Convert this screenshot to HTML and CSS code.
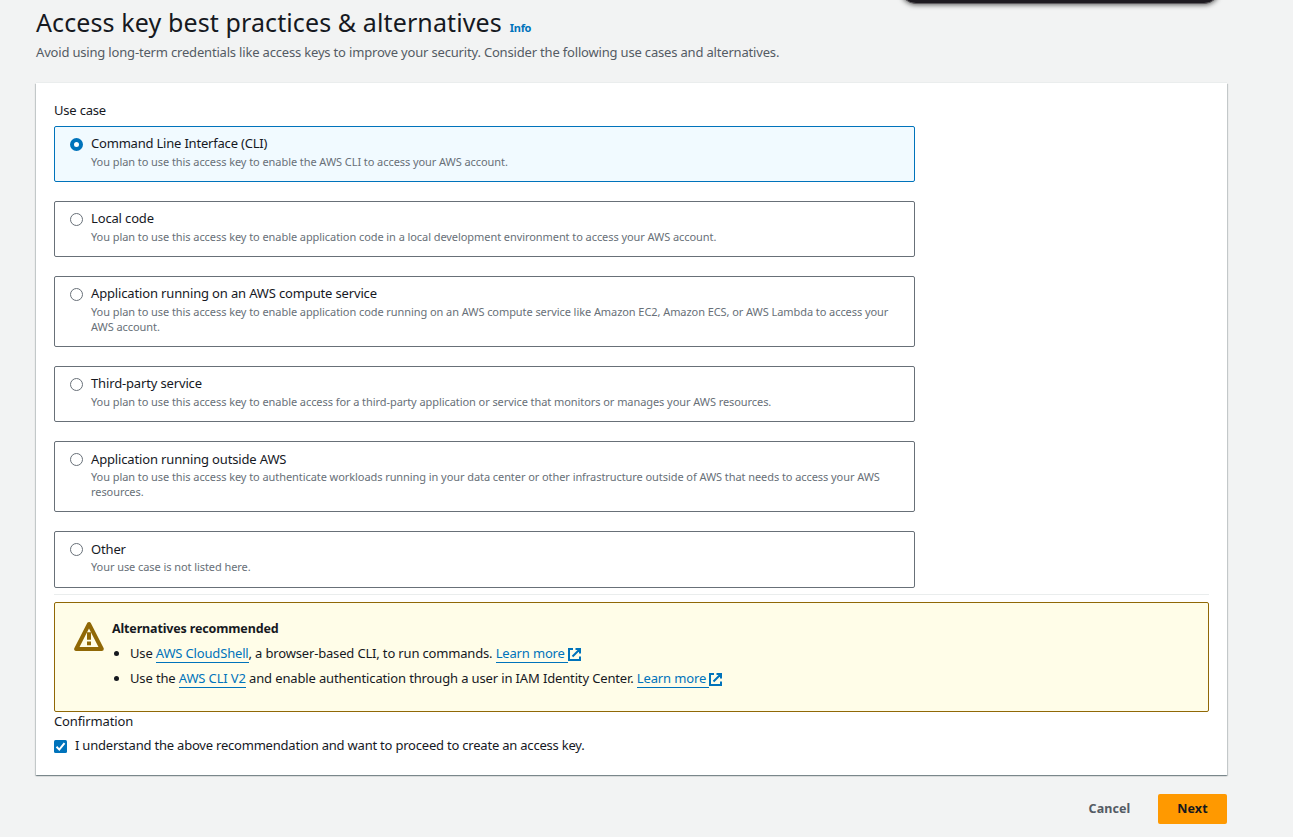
FILE: index.html
```html
<!DOCTYPE html>
<html lang="en">
<head>
<meta charset="utf-8">
<title>Access key best practices &amp; alternatives</title>
<link rel="stylesheet" href="styles.css">
</head>
<body>
<div class="floating-bar"></div>
<main class="page">
  <header class="header">
    <h1 class="title"><span>Access key best practices &amp; alternatives</span><a class="info">Info</a></h1>
    <p class="subtitle">Avoid using long-term credentials like access keys to improve your security. Consider the following use cases and alternatives.</p>
  </header>
  <section class="panel">
    <div class="field-label">Use case</div>
    <div class="tiles">
      <label class="tile selected"><i class="radio"></i><div><div class="name">Command Line Interface (CLI)</div><div class="desc">You plan to use this access key to enable the AWS CLI to access your AWS account.</div></div></label>
      <label class="tile"><i class="radio"></i><div><div class="name">Local code</div><div class="desc">You plan to use this access key to enable application code in a local development environment to access your AWS account.</div></div></label>
      <label class="tile tall"><i class="radio"></i><div><div class="name">Application running on an AWS compute service</div><div class="desc">You plan to use this access key to enable application code running on an AWS compute service like Amazon EC2, Amazon ECS, or AWS Lambda to access your<br>AWS account.</div></div></label>
      <label class="tile"><i class="radio"></i><div><div class="name">Third-party service</div><div class="desc">You plan to use this access key to enable access for a third-party application or service that monitors or manages your AWS resources.</div></div></label>
      <label class="tile tall low"><i class="radio"></i><div><div class="name">Application running outside AWS</div><div class="desc">You plan to use this access key to authenticate workloads running in your data center or other infrastructure outside of AWS that needs to access your AWS<br>resources.</div></div></label>
      <label class="tile last low"><i class="radio"></i><div><div class="name">Other</div><div class="desc">Your use case is not listed here.</div></div></label>
    </div>
    <hr class="rule">
    <div class="alert">
      <svg class="warn" viewBox="0 0 30 30"><path d="M15 3 2.2 28h25.6Z" fill="none" stroke="#906806" stroke-width="4" stroke-linejoin="round"/><path d="M15 11.3v7.4M15 20.5v3.8" fill="none" stroke="#906806" stroke-width="4"/></svg>
      <div>
        <div class="alert-title">Alternatives recommended</div>
        <ul class="alert-list">
          <li class="cloudshell">Use <a class="link">AWS CloudShell</a>, a browser-based CLI, to run commands. <a class="link">Learn more&nbsp;</a><svg class="ext" viewBox="0 0 13 13"><path d="M5 1H1v11h11V8.5M7.5 1H12v4.5M12 1 4.5 8.5" fill="none" stroke="#0073bb" stroke-width="2"/></svg></li>
          <li>Use the <a class="link">AWS CLI V2</a> and enable authentication through a user in IAM Identity Center. <a class="link">Learn more&nbsp;</a><svg class="ext" viewBox="0 0 13 13"><path d="M5 1H1v11h11V8.5M7.5 1H12v4.5M12 1 4.5 8.5" fill="none" stroke="#0073bb" stroke-width="2"/></svg></li>
        </ul>
      </div>
    </div>
    <div class="field-label confirm-label">Confirmation</div>
    <label class="confirm"><svg class="check" viewBox="0 0 13 13"><rect width="13" height="13" rx="1.5" fill="#0073bb"/><path d="m2.5 6.8 2.8 2.8 5.2-6.4" fill="none" stroke="#fff" stroke-width="2"/></svg><span>I understand the above recommendation and want to proceed to create an access key.</span></label>
  </section>
  <footer class="actions"><button class="btn">Cancel</button><button class="btn primary">Next</button></footer>
</main>
</body>
</html>
```
FILE: styles.css
```css
* { box-sizing: border-box; }
body { margin: 0; height: 837px; overflow: hidden; background: #f2f3f3; color: #16191f; font: 13px/20px "Noto Sans", "Open Sans", sans-serif; letter-spacing: -.15px; position: relative; }
.floating-bar { position: absolute; left: 900px; top: -40px; width: 320px; height: 44px; border: 1px solid #5b585c; border-radius: 16px; background: #1d1a20; box-shadow: 0 1px 5px rgba(0,0,0,.6); }
.page { padding: 6px 66px 0 36px; }
.header { height: 77px; }
.title { margin: 0; font-size: 25px; line-height: 32px; font-weight: 400; letter-spacing: .11px; display: flex; align-items: baseline; gap: 8px; }
.info { font-size: 11px; font-weight: 700; letter-spacing: -.3px; color: #0073bb; }
.subtitle { margin: -2px 0 0; letter-spacing: -.18px; color: #545b64; }
.panel { height: 692px; padding: 17px 18px 18px; background: #fff; box-shadow: 0 1px 1px rgba(0,28,36,.3), 1px 1px 1px rgba(0,28,36,.15), -1px 1px 1px rgba(0,28,36,.15), 0 -1px 0 #eaeded; }
.field-label { height: 26px; letter-spacing: -.2px; }
.tiles { width: 861px; display: flex; flex-direction: column; gap: 19px; }
.tile { display: flex; gap: 8px; height: 56px; padding: 6px 15px; border: 1px solid #687078; border-radius: 2px; white-space: nowrap; }
.tile.tall { height: 71px; }
.tile.last { height: 57px; }
.selected { background: #f1faff; border-color: #0073bb; }
.radio { flex: none; width: 13px; height: 13px; margin-top: 5px; border: 1px solid #687078; border-radius: 50%; background: #fff; }
.selected .radio { border: 4px solid #0073bb; }
.name { height: 21px; }
.selected .name { letter-spacing: -.2px; }
.low .name { padding-top: 1px; }
.desc { font-size: 11px; line-height: 15px; letter-spacing: -.07px; color: #687078; }
.rule { margin: 6px 0 7px; border: 0; border-top: 1px solid #eaeded; }
.alert { display: flex; height: 110px; padding: 15px 19px; gap: 8px; background: #fffde8; border: 1px solid #906806; border-radius: 2px; }
.warn { width: 30px; height: 30px; margin-top: 3px; }
.alert-title { height: 21px; padding-top: 1px; font-weight: 700; font-size: 12.5px; letter-spacing: -.15px; }
.alert-list { margin: 2px 0 0; padding-left: 18px; letter-spacing: -.14px; }
.alert-list li { height: 25px; line-height: 25px; white-space: nowrap; }
.alert-list .cloudshell { letter-spacing: -.165px; }
.link { color: #0073bb; border-bottom: 1px solid #0073bb; }
.ext { width: 13px; height: 13px; vertical-align: -3px; }
.confirm-label { margin-top: -1px; height: 24px; letter-spacing: -.13px; }
.confirm { display: flex; align-items: flex-start; gap: 8px; letter-spacing: -.21px; }
.check { width: 13px; height: 13px; margin-top: 5px; }
.actions { display: flex; justify-content: flex-end; padding-top: 19px; }
.btn { height: 30px; width: 69px; border: 0; border-radius: 2px; background: transparent; color: #545b64; font: 700 12.5px/20px "Noto Sans", sans-serif; letter-spacing: .1px; padding: 0; }
.btn + .btn { margin-left: 14px; }
.primary { background: #ff9900; color: #16191f; }
```
